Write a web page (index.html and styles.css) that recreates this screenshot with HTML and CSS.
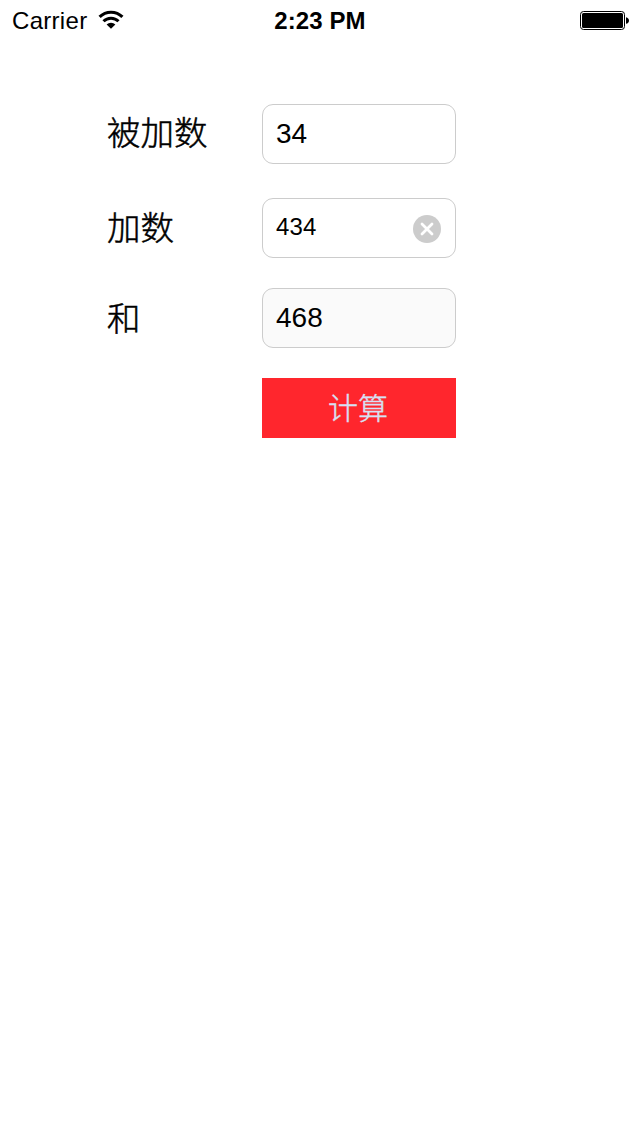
FILE: index.html
```html
<!DOCTYPE html>
<html lang="zh-CN">
<head>
<meta charset="utf-8">
<title>加法计算</title>
<link rel="stylesheet" href="styles.css">
</head>
<body>
<header class="status">
  <div class="status-left">
    <span class="carrier">Carrier</span>
    <svg class="wifi" width="26" height="20" viewBox="0 0 26 20">
      <path d="M1.6 6.9a16.2 16.2 0 0 1 22.8 0" fill="none" stroke="#000" stroke-width="3.1"/>
      <path d="M5.5 11.2a10.7 10.7 0 0 1 15 0" fill="none" stroke="#000" stroke-width="3"/>
      <path d="M8.6 14.6a6.2 6.2 0 0 1 8.8 0L13 18.8z"/>
    </svg>
  </div>
  <span class="time">2:23 PM</span>
  <div class="status-right">
    <svg class="battery" width="50" height="20" viewBox="0 0 50 20">
      <rect x=".5" y=".5" width="44" height="18" rx="3" fill="#fff" stroke="#000"/>
      <rect x="2" y="2" width="41" height="15" rx="1.5"/>
      <path d="M46 6.2c1.9.3 3 1.7 3 3.3s-1.1 3-3 3.3z"/>
    </svg>
  </div>
</header>
<main class="form">
  <label class="label label-first" for="a">被加数</label>
  <div class="field"><input class="value" id="a" value="34"></div>
  <label class="label" for="b">加数</label>
  <div class="field">
    <input class="value value-small" id="b" value="434">
    <svg class="clear" width="28" height="28" viewBox="0 0 28 28">
      <circle cx="14" cy="14" r="14" fill="#ccc"/>
      <path d="M9 9l10 10M19 9L9 19" stroke="#fff" stroke-width="2.8" stroke-linecap="round"/>
    </svg>
  </div>
  <label class="label label-result" for="c">和</label>
  <div class="field field-result"><input class="value" id="c" value="468" readonly></div>
  <button class="submit" type="button">计算</button>
</main>
</body>
</html>
```
FILE: styles.css
```css
* { box-sizing: border-box; }
body {
  margin: 0;
  min-height: 1136px;
  background: #fff;
  color: #000;
  font-family: "Liberation Sans", "Noto Sans CJK SC", sans-serif;
}
.status {
  display: grid;
  grid-template-columns: 1fr auto 1fr;
  height: 40px;
  padding: 0 10px 0 12px;
  font-size: 24px;
  line-height: 42px;
}
.status-left { display: flex; }
.carrier { width: 86px; letter-spacing: 0.3px; }
.wifi { margin-top: 10px; }
.time {
  margin-left: -2px;
  font-weight: 700;
  letter-spacing: 0.1px;
}
.status-right { display: flex; justify-content: flex-end; }
.battery { margin: 11px 0 0; }
.form {
  display: grid;
  grid-template-columns: 155px 194px;
  grid-template-rows: 64px 60px 60px 60px;
  row-gap: 30px;
  padding: 64px 0 0 107px;
}
.label {
  font-family: "Noto Sans CJK SC", sans-serif;
  font-size: 33.5px;
  font-weight: 300;
  line-height: 55px;
  -webkit-text-stroke: 0.5px currentColor;
}
.label-first { line-height: 54px; }
.label-result { line-height: 57px; }
.field {
  display: flex;
  align-items: center;
  height: 60px;
  padding: 0 14px 0 13px;
  border: 1px solid #ccc;
  border-radius: 11px;
}
.field-result { background: #fafafa; }
.value {
  flex: 1;
  min-width: 0;
  height: 58px;
  padding: 0;
  border: 0;
  outline: 0;
  background: transparent;
  color: #000;
  font: 28px "Liberation Sans", sans-serif;
}
.value-small {
  padding-bottom: 2px;
  font-size: 24px;
  letter-spacing: 0.2px;
}
.clear { margin-top: 2px; }
.submit {
  grid-column: 2;
  height: 60px;
  padding: 0 2px 3px 0;
  border: 0;
  background: #ff262d;
  color: #d6e1f5;
  font: 300 30px/57px "Noto Sans CJK SC", sans-serif;
  -webkit-text-stroke: 0.4px currentColor;
}
```
